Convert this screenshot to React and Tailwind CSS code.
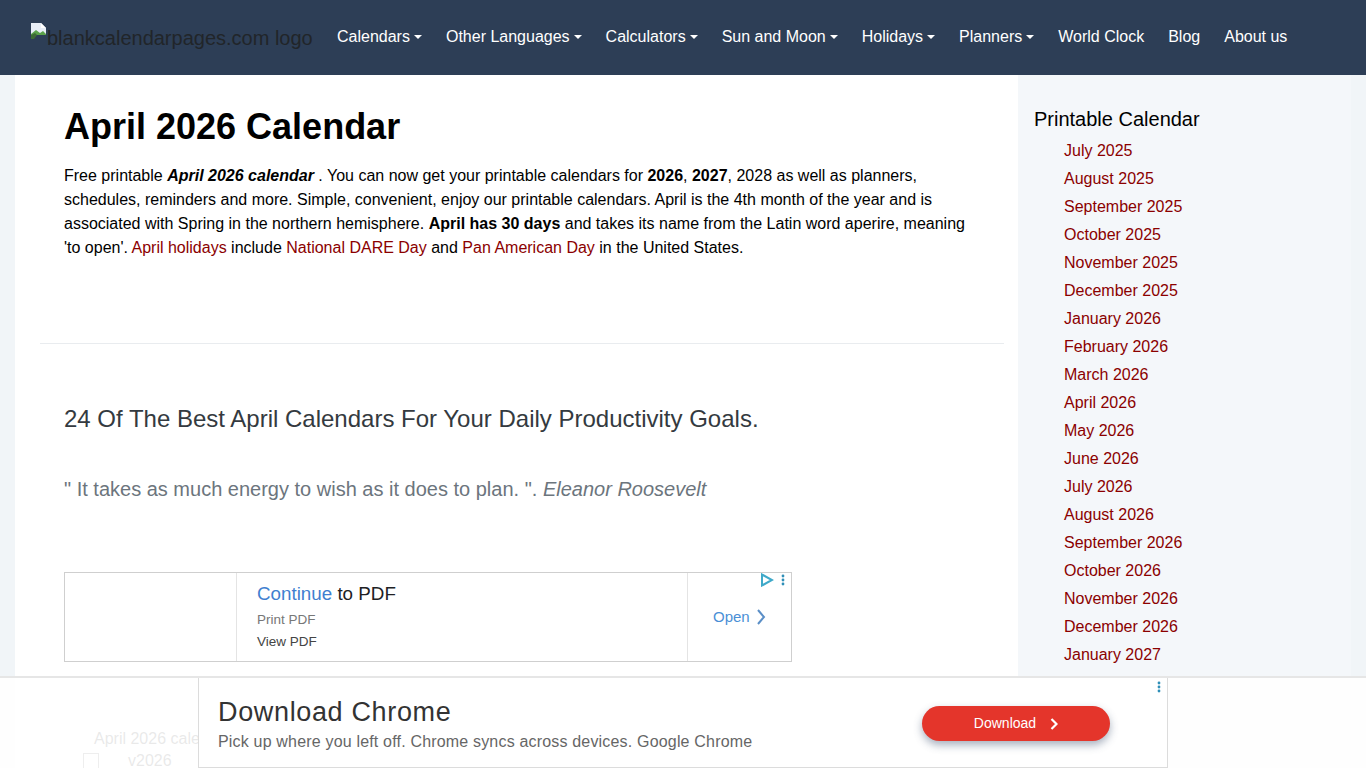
import React from "react";

const NAV = [
  { label: "Calendars", caret: true },
  { label: "Other Languages", caret: true },
  { label: "Calculators", caret: true },
  { label: "Sun and Moon", caret: true },
  { label: "Holidays", caret: true },
  { label: "Planners", caret: true },
  { label: "World Clock" },
  { label: "Blog" },
  { label: "About us" },
];

const MONTHS = [
  "July 2025", "August 2025", "September 2025", "October 2025", "November 2025", "December 2025",
  "January 2026", "February 2026", "March 2026", "April 2026", "May 2026", "June 2026",
  "July 2026", "August 2026", "September 2026", "October 2026", "November 2026", "December 2026",
  "January 2027",
];

function BrokenImage() {
  return (
    <svg width="16" height="16" viewBox="0 0 16 16" className="absolute left-0 top-[-2px]">
      <path d="M0 0h10l5 5v6H0z" fill="#e8eef7" />
      <path d="M10 0l5 5h-5z" fill="#fff" />
      <path d="M0 11l5-4 4 3 3-2 3 3v1H0z" fill="#5aa14a" />
      <path d="M0 16v-4l4-2 2 2-3 4z" fill="#3d6b35" />
    </svg>
  );
}

function Dots({ className }) {
  return (
    <svg width="4" height="12" viewBox="0 0 4 12" className={className}>
      <circle cx="2" cy="2" r="1.4" fill="#2f8fb8" />
      <circle cx="2" cy="6" r="1.4" fill="#2f8fb8" />
      <circle cx="2" cy="10" r="1.4" fill="#2f8fb8" />
    </svg>
  );
}

function InlineAd() {
  return (
    <div className="relative mt-[68px] flex h-[90px] w-[728px] border border-[#cfcfcf] bg-white">
      <div className="w-[172px] shrink-0 border-r border-[#e4e4e4]" />
      <div className="flex-1 pl-5 pt-[9px]">
        <div className="text-[18.8px] leading-[24px] text-[#202124]">
          <span className="text-[#3f7fd0]">Continue</span> to PDF
        </div>
        <div className="mt-[3px] text-[13.5px] leading-[22px] text-[#777]">Print PDF</div>
        <div className="text-[13.5px] leading-[22px] text-[#444]">View PDF</div>
      </div>
      <div className="flex w-[104px] shrink-0 items-center gap-[6px] border-l border-[#e4e4e4] pl-[25px]">
        <span className="text-[15px] text-[#4a8fd6]">Open</span>
        <svg width="10" height="16" viewBox="0 0 10 16" fill="none" stroke="#5b8fc7" strokeWidth="2">
          <path d="M2 1l6 7-6 7" />
        </svg>
      </div>
      <svg width="14" height="14" viewBox="0 0 14 14" fill="none" stroke="#3fa9c9" strokeWidth="2" className="absolute right-[17px] top-[0px]">
        <path d="M2 1.5v11L12 7z" />
      </svg>
      <Dots className="absolute right-[6px] top-[1px]" />
    </div>
  );
}

function BottomAd() {
  return (
    <div className="absolute bottom-0 left-0 right-0 flex h-[92px] justify-center border-t-2 border-[#e6e6e6] bg-white/90">
      <div className="relative flex h-[90px] w-[970px] items-center justify-between border-x border-b border-[#dcdcdc] bg-white pl-[19px] pr-[57px] pt-[2px]">
        <div className="pt-[1px]">
          <div className="text-[27px] leading-[34px] tracking-[0.65px] text-[#333]">Download Chrome</div>
          <div className="mt-[2px] text-[16px] leading-[22px] tracking-[0.18px] text-[#666]">
            Pick up where you left off. Chrome syncs across devices. Google Chrome
          </div>
        </div>
        <div className="flex h-[35px] w-[188px] items-center justify-center gap-[14px] rounded-full bg-[#e4352b] text-[14px] text-white shadow-[0_4px_8px_rgba(60,80,110,0.45)]">
          Download
          <svg width="8" height="12" viewBox="0 0 8 12" fill="none" stroke="#fff" strokeWidth="2.2">
            <path d="M1.5 1l5 5-5 5" />
          </svg>
        </div>
        <Dots className="absolute right-[6px] top-[3px]" />
      </div>
    </div>
  );
}

export default function App() {
  return (
    <div className="relative h-screen overflow-hidden bg-[#f1f5f8] font-['Liberation_Sans',Arial,sans-serif] text-black">
      {/* navbar */}
      <nav className="flex h-[75px] items-center bg-[#2d3e56] pb-[2px] pl-[31px]">
        <div className="relative mr-3 h-[24px] w-[282px] pt-[1px] text-[20px] leading-[24px] text-[#212529]">
          <BrokenImage />
          <span className="pl-[16px]">blankcalendarpages.com logo</span>
        </div>
        {NAV.map((item) => (
          <div key={item.label} className="flex items-center px-3 text-[16px] text-white">
            {item.label}
            {item.caret && <span className="ml-[4px] h-0 w-0 border-x-[4.8px] border-t-[4.8px] border-x-transparent border-t-white" />}
          </div>
        ))}
      </nav>

      <div className="mx-[15px] flex">
        {/* main */}
        <main className="h-[693px] w-[1003px] shrink-0 bg-white">
          <div className="pl-[49px] pr-[38px]">
            <h1 className="pt-[30px] text-[36px] font-bold leading-[43px]">April 2026 Calendar</h1>
            <p className="mt-[16px] w-[916px] text-[16px] leading-[24px]">
              Free printable <b><i>April 2026 calendar</i></b> . You can now get your printable calendars for <b>2026</b>, <b>2027</b>, 2028 as well as planners, schedules, reminders and more. Simple, convenient, enjoy our printable calendars. April is the 4th month of the year and is associated with Spring in the northern hemisphere. <b>April has 30 days</b> and takes its name from the Latin word aperire, meaning 'to open'. <span className="text-[#8b0000]">April holidays</span> include <span className="text-[#8b0000]">National DARE Day</span> and <span className="text-[#8b0000]">Pan American Day</span> in the United States.
            </p>
          </div>
          <hr className="mx-[25px] mt-[83px] w-[964px] border-[#e9ecef]" />
          <div className="pl-[49px]">
            <h2 className="mt-[60px] text-[24px] leading-[29px] text-[#343a40]">24 Of The Best April Calendars For Your Daily Productivity Goals.</h2>
            <p className="mt-[41px] text-[20px] leading-[30px] text-[#6c757d]">
              " It takes as much energy to wish as it does to plan. ". <i>Eleanor Roosevelt</i>
            </p>
            <InlineAd />
            <div className="mt-[65px] pl-[30px] text-[16px] leading-[24px] text-[#222]">April 2026 calendar</div>
            <div className="flex items-center pl-[19px] text-[16px] leading-[20px] text-[#222]">
              <span className="h-[16px] w-[16px] border border-[#555]" />
              <span className="ml-[29px]">v2026</span>
            </div>
          </div>
        </main>

        {/* sidebar */}
        <aside className="w-[333px] bg-[#f4f7fa] pl-4 pt-[30px]">
          <h3 className="text-[20px] leading-[28px]">Printable Calendar</h3>
          <ul className="mt-[4px] pl-[30px]">
            {MONTHS.map((m, i) => (
              <li key={i} className="text-[16px] leading-[28px] text-[#8b0000]">{m}</li>
            ))}
          </ul>
        </aside>
      </div>

      <BottomAd />
    </div>
  );
}
